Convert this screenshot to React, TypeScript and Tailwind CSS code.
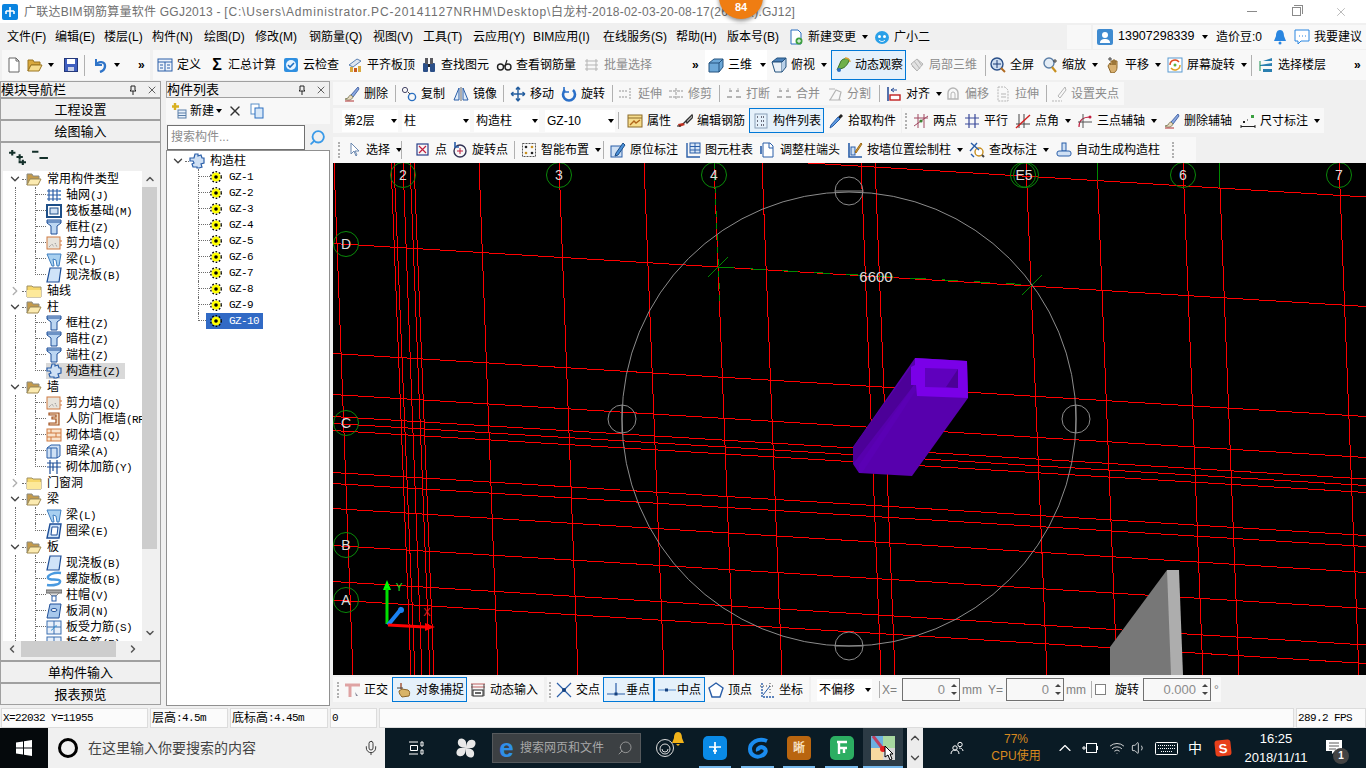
import type { ReactNode } from 'react'
import clsx from 'clsx'
import { ChevronDown, ChevronLeft, ChevronRight, ChevronUp, Mic, Search, Volume1, Wifi, X } from 'lucide-react'

const S = ({ children, className }: { children: ReactNode; className?: string }) => (
  <svg viewBox="0 0 16 16" className={clsx('h-4 w-4 shrink-0', className)} fill="none">
    {children}
  </svg>
)

const B = '#2a5ea8'
const G = '#b5b5b5'

// toolbar icons
const I = {
  doc: <S><path d="M3 1h7l3 3v11H3z" fill="#fff" stroke="#666" /><path d="M10 1v3h3" stroke="#666" /></S>,
  folder: <S><path d="M1 3h5l1 2h6v3H4l-3 6z" fill="#d9a93e" stroke="#9a7420" /><path d="M4 8h11l-3 6H1z" fill="#f6dc8c" stroke="#9a7420" /></S>,
  save: <S><rect x="1.5" y="1.5" width="13" height="13" fill="#3f5fc0" stroke="#24387a" /><rect x="4" y="2" width="8" height="5" fill="#fff" /><rect x="5" y="10" width="6" height="4" fill="#c8d0e8" /></S>,
  undo: <S><path d="M4 2v6h6" stroke="#2f74c8" strokeWidth="2" /><path d="M4 8c2-4 9-4 9 1 0 3-2 5-5 6" stroke="#2f74c8" strokeWidth="2.4" /></S>,
  define: <S><rect x="1" y="2" width="14" height="12" fill="#eef3fa" stroke={B} /><path d="M1 5h14M8 5v9M3 8h3M3 11h3M10 8h3M10 11h3" stroke={B} /></S>,
  sigma: <span className="w-[14px] shrink-0 text-center text-[16px] font-bold leading-none">Σ</span>,
  cloud: <S><rect x="1" y="1" width="14" height="14" rx="2" fill="#2f8fe0" /><circle cx="8" cy="8" r="5" fill="#e8f4ff" /><path d="M5 8l2 2 4-4" stroke="#1f6fc0" strokeWidth="1.6" /></S>,
  level: <S><path d="M2 8l8-6 4 2-8 6z" fill="#dfe6f0" stroke="#5a7fb0" /><rect x="3" y="10" width="3" height="5" fill="#d9a93e" /><rect x="7" y="11" width="3" height="4" fill="#c85a20" /><rect x="11" y="9" width="3" height="6" fill="#d9a93e" /></S>,
  binoc: <S><rect x="2" y="6" width="5" height="9" rx="1" fill="#2b4f88" /><rect x="9" y="6" width="5" height="9" rx="1" fill="#2b4f88" /><rect x="4" y="1" width="3" height="6" fill="#59595f" /><rect x="9" y="1" width="3" height="6" fill="#59595f" /><rect x="7" y="7" width="2" height="3" fill="#222" /></S>,
  glass: <S><circle cx="4.5" cy="10" r="3" stroke="#222" strokeWidth="1.4" /><circle cx="12" cy="10" r="3" stroke="#222" strokeWidth="1.4" /><path d="M7 9h2.4M9 9l2-6" stroke="#222" strokeWidth="1.2" /></S>,
  batch: <S><path d="M3 2v12M1 4h13M1 8h13M1 12h13M12 2v12" stroke={G} /></S>,
  cube: <S><path d="M1 6l5-4h9v8l-4 5H1z" fill="#6ca8d8" stroke="#24527e" /><path d="M1 6h10v9M11 6l4-4" stroke="#24527e" /></S>,
  cubeTop: <S><path d="M1 5l5-4h9l-4 4z" fill="#4a80b8" stroke="#24527e" /><path d="M1 5h10v10H4z" fill="#eaf1f8" stroke="#24527e" /><path d="M11 5l4-4v9l-4 5" fill="#b8d0e8" stroke="#24527e" /></S>,
  orbit: <S><path d="M2 13l4-9c2-3 8-3 8-1s-3 7-6 8z" fill="#6fb04a" stroke="#3a7028" /><circle cx="4" cy="13" r="2" fill="#2a6fc0" /><path d="M10 1c3 0 5 2 5 4" stroke="#e0a030" strokeWidth="1.4" /></S>,
  part3d: <S><path d="M2 7l6-5 6 5-6 7z" fill="#e2e2e2" stroke={G} /><path d="M5 4l6 8M8 2l5 7M3 9l5 5" stroke={G} /></S>,
  fit: <S><circle cx="7" cy="7" r="6" fill="#cfdff2" stroke="#2a4f88" strokeWidth="1.4" /><path d="M7 3v8M3 7h8" stroke="#1f3f78" /><path d="M11 11l4 4" stroke="#b06a20" strokeWidth="2" /></S>,
  zoom: <S><circle cx="7" cy="6" r="5" fill="#e4edf6" stroke="#5b7ea6" strokeWidth="1.4" /><path d="M10 10l4 5" stroke="#c89020" strokeWidth="2.2" /><path d="M13 2v4M11 4h4" stroke="#444" /></S>,
  hand: <S><path d="M3 9l2-3 1 2V4h2v4-5h2v5-4h2v6c0 4-2 6-5 6H6z" fill="#d8b070" stroke="#8a6428" /><path d="M3 2h4M5 0v4" stroke="#444" /></S>,
  rotate: <S><rect x="1" y="1" width="14" height="14" fill="#fff" stroke="#5a9ad0" /><path d="M3 8a5 5 0 0 1 9-3" stroke="#e04a20" strokeWidth="1.5" /><path d="M13 8a5 5 0 0 1-9 3" stroke="#e0a020" strokeWidth="1.5" /><circle cx="8" cy="8" r="1.5" fill="#60b040" /></S>,
  floors: <S><path d="M5 4l9-3v3H5zM2 8l12-2v3H2zM5 12h9v3H5z" fill="#2a7fb0" /><path d="M2 4v10" stroke="#1a9050" /></S>,
  brush: <S><path d="M14 1L7 9l2 2 6-8z" fill="#8aa8e0" stroke="#4a68a8" /><path d="M7 9c-2 0-2 2-3 3l-3 1c3 2 7 1 8-2z" fill="#e8d8c0" stroke="#886" /><path d="M1 15h9" stroke="#b03030" /></S>,
  copy: <S><circle cx="4" cy="4" r="2.6" stroke="#446" /><circle cx="11" cy="11" r="3.6" stroke="#2a6fc0" strokeWidth="1.4" /><path d="M7 6l2 2" stroke="#444" /></S>,
  mirror: <S><path d="M6 2v12H1zM10 2v12h5z" fill="#e0ecf8" stroke="#2a5ea8" /><path d="M8 1v14" stroke="#666" /></S>,
  move: <S><path d="M8 1v14M1 8h14M8 1L6 3.500M8 1l2 2.500M8 15l-2-2.500M8 15l2-2.500M1 8l2.500-2M1 8l2.500 2M15 8l-2.500-2M15 8l-2.500 2" stroke="#235d9e" strokeWidth="1.4" /></S>,
  rot: <S><path d="M4 4a6 6 0 1 0 8 0" stroke="#2a6fc8" strokeWidth="2.6" /><path d="M3 1v5h5" stroke="#2a6fc8" strokeWidth="1.6" /></S>,
  extend: <S><path d="M1 5h8M1 11h8M12 2v12" stroke={G} strokeWidth="1.4" strokeDasharray="2 1" /></S>,
  trim: <S><path d="M1 5h14M1 11h14M8 2v12" stroke={G} strokeWidth="1.4" strokeDasharray="3 1" /></S>,
  brk: <S><path d="M1 11h5M10 11h5M3 5h3M10 5h3" stroke={G} strokeWidth="2" /><path d="M4 2v3M12 2v3" stroke={G} /></S>,
  poly: <S><path d="M2 14h12M3 14l6-10 5 2-2 8M2 3h6" stroke={G} strokeWidth="1.2" /></S>,
  alignL: <S><path d="M2 1v14" stroke="#2a4f98" strokeWidth="1.6" /><rect x="4" y="9" width="10" height="5" fill="#fff" stroke="#c02020" strokeWidth="1.4" /><path d="M5 4h6M5 4l3-2M5 4l3 2" stroke="#2a4f98" /></S>,
  offset: <S><path d="M3 13V7a5 5 0 0 1 10 0v6z" stroke={G} strokeWidth="1.4" /><path d="M6 13V8a2 2 0 0 1 4 0v5" stroke={G} /></S>,
  stretch: <S><path d="M3 1h7l3 3v11H3z" stroke={G} strokeDasharray="2 1" /><path d="M6 8h5M6 11h5" stroke={G} /></S>,
  grip: <S><path d="M14 1L7 10l2 2 6-8z" stroke={G} /><path d="M1 15h10" stroke={G} strokeDasharray="2 1" /></S>,
  attr: <S><rect x="1" y="2" width="14" height="12" fill="#f6dc8c" stroke="#8a6a28" /><path d="M1 5h14" stroke="#8a6a28" /><path d="M3 12l4-4 2 2 4-3" stroke="#b0661c" strokeWidth="1.4" /></S>,
  edit: <S><path d="M15 2L9 8l1 2 6-6zM9 8l-3 3" stroke="#333" strokeWidth="1.4" /><path d="M1 11l5-1 2 2-6 2z" fill="#c03020" /><path d="M0 13h4" stroke="#222" /></S>,
  list: <S><rect x="2" y="1" width="12" height="14" stroke="#8aa0b8" /><path d="M4 4h2M4 8h2M4 12h2M8 4h4M8 8h4M8 12h4" stroke="#445" strokeDasharray="1 1" strokeWidth="1.4" /></S>,
  picker: <S><path d="M13 1l2 2-3 3-2-2z" fill="#222" /><path d="M10 4l2 2-7 7-3 2 1-3z" fill="#5e9ae0" stroke="#2a5ea8" /></S>,
  two: <S><path d="M1 13L15 3M5 1v14M11 1v14M1 5h14" stroke="#a04860" /><circle cx="8" cy="8" r="1.600" fill="#3a8030" /></S>,
  par: <S><path d="M5 1v14M11 1v14M1 5h14M1 11h14" stroke="#3a4a9a" strokeWidth="1.2" /></S>,
  ang: <S><path d="M4 1v14M9 1v14M1 11h14" stroke="#444" /><path d="M1 15L15 2" stroke="#d02020" strokeWidth="1.4" /></S>,
  three: <S><path d="M2 14c0-7 4-10 11-10" stroke="#c02040" strokeWidth="1.2" /><path d="M6 1v14M1 9h14" stroke="#555" /><circle cx="13" cy="4" r="1.500" fill="#c02040" /></S>,
  dim: <S><path d="M1 12v3M15 12v3M1 13.500h14" stroke="#222" /><rect x="3" y="8" width="2" height="2" fill="#222" /><rect x="11" y="2" width="3" height="3" fill="#3aa040" /><path d="M7 7h1" stroke="#222" /></S>,
  cursor: <S><path d="M5 1v11l3-3 2 5 1-1-2-4h4z" fill="#fff" stroke="#6a88b0" /></S>,
  pointX: <S><rect x="2" y="2" width="11" height="11" stroke="#2a3f88" strokeWidth="1.2" /><path d="M4 4l7 7M11 4l-7 7" stroke="#c02040" strokeWidth="1.2" /></S>,
  rotPt: <S><circle cx="8" cy="9" r="6" stroke="#335" strokeWidth="1.4" /><path d="M8 6v6M5 9h6" stroke="#c02040" /><path d="M3 0v5h4" stroke="#2a5ea8" strokeWidth="1.6" /></S>,
  smart: <S><rect x="1.5" y="1.5" width="13" height="13" stroke="#555" strokeDasharray="2 1" /><circle cx="5" cy="5" r="1.300" fill="#222" /><circle cx="11" cy="5" r="1.300" fill="#c89020" /><circle cx="5" cy="11" r="1.300" fill="#c89020" /><circle cx="11" cy="11" r="1.300" fill="#222" /></S>,
  tag: <S><rect x="1" y="4" width="11" height="11" fill="#cfe0f4" stroke="#2a5ea8" /><path d="M6 11l7-10 2 2-7 10-3 1z" fill="#4a90d8" stroke="#1e4f88" /></S>,
  table: <S><path d="M2 1v14h13" stroke="#2a5ea8" strokeWidth="1.4" /><rect x="5" y="1" width="10" height="10" fill="#d8e6f6" stroke="#2a5ea8" /><path d="M5 4.500h10M5 8h10M10 1v10" stroke="#2a5ea8" /></S>,
  adjust: <S><path d="M3 1h7l3 3v11H3z" fill="#fff" stroke="#2a5ea8" /><path d="M9 1v5h4" stroke="#2a5ea8" /><path d="M1 4v8" stroke="#2a5ea8" strokeWidth="1.6" /></S>,
  wall: <S><path d="M2 1v14h13" stroke="#2a5ea8" strokeWidth="1.6" /><rect x="4" y="5" width="4" height="8" fill="#cfe0f4" stroke="#2a5ea8" /><path d="M8 10l6-9 1 1-6 9z" fill="#e0a030" stroke="#9a6a18" /></S>,
  check: <S><circle cx="10" cy="10" r="4" fill="#fff" stroke="#c89020" strokeWidth="1.4" /><path d="M13 13l2 2" stroke="#444" strokeWidth="2" /><path d="M2 1l8 7M8 1L1 9M2 12l3 3" stroke="#2a5ea8" strokeWidth="1.4" /></S>,
  auto: <S><rect x="6" y="1" width="4" height="8" fill="#cfe0f4" stroke="#2a5ea8" /><rect x="1" y="9" width="14" height="5" rx="2" fill="#cfe0f4" stroke="#2a5ea8" /></S>,
  ortho: <S><path d="M1 3h15M6 3v12" stroke="#dfa3a3" strokeWidth="3" /><path d="M11 10l3 4-2 0z" fill="#889" /></S>,
  snap: <S><path d="M5 1v6" stroke="#a05030" strokeWidth="1.4" /><path d="M1 6h6" stroke="#444" /><path d="M3 9l3-2 6 1c2 1 2 4 1 6l-7 1c-2-2-3-4-3-6z" fill="#d8b468" stroke="#8a6428" /></S>,
  dyn: <S><path d="M1 2h14M1 5h14" stroke="#c06060" /><path d="M2 2v12M14 2v12" stroke="#444" /><rect x="3" y="8" width="10" height="6" fill="#fff" stroke="#222" /><path d="M5 11h6" stroke="#222" strokeWidth="1.4" /></S>,
  cross: <S><path d="M1 1l14 14M15 1L1 15" stroke="#2a5ea8" strokeWidth="1.2" /><circle cx="8" cy="8" r="2" fill="#14407e" /></S>,
  vert: <S><path d="M8 1l7 5-3 9H4L1 6z" fill="#fff" stroke="#2a5ea8" strokeWidth="1.4" /></S>,
  coord: <S><path d="M3 1v14h12" stroke="#2a5ea8" strokeDasharray="2 1" strokeWidth="1.4" /><path d="M1 4h14M11 1v12" stroke="#444" strokeDasharray="1 2" /><path d="M4 13l7-9" stroke="#2a5ea8" /></S>,
  user: <S><rect x="0" y="0" width="16" height="16" rx="2" fill="#3f8bd0" /><circle cx="8" cy="6" r="3" fill="#fff" /><path d="M3 14c0-3 2-4 5-4s5 1 5 4z" fill="#fff" /></S>,
  bell: <S><path d="M8 1c-3 0-4 3-4 6l-2 5h12l-2-5c0-3-1-6-4-6z" fill="#2a86e0" /><circle cx="8" cy="14" r="1.500" fill="#2a86e0" /></S>,
  msg: <S><path d="M1 1h14v11H7l-3 3v-3H1z" fill="#fff" stroke="#2a86e0" /><path d="M5 7h1M8 7h1M11 7h1" stroke="#2a86e0" /></S>,
  change: <S><path d="M3 1h7l3 3v11H3z" fill="#fff" stroke="#2a6ec0" /><circle cx="11" cy="12" r="3.500" fill="#3fa040" /><path d="M11 10v4M9 12h4" stroke="#fff" /></S>,
  helper: <S><ellipse cx="8" cy="8.500" rx="7" ry="6.500" fill="#2aa0e8" /><circle cx="5.500" cy="7.500" r="1.500" fill="#fff" /><circle cx="10.500" cy="7.500" r="1.500" fill="#fff" /><path d="M5 11c2 2 4 2 6 0" stroke="#fff" /></S>,
  perp: <svg viewBox="0 0 20 16" className="h-4 w-5 shrink-0" fill="none"><path d="M10 1v11M1 12h18" stroke="#2a5ea8" strokeWidth="1.2" /><rect x="8.500" y="10.500" width="3" height="3" fill="#14407e" /></svg>,
  mid: <svg viewBox="0 0 20 16" className="h-4 w-5 shrink-0" fill="none"><path d="M1 8h18" stroke="#7fa8d8" strokeWidth="1.4" /><rect x="8" y="6.500" width="3" height="3" fill="#14407e" /></svg>,
}

// tree icons
const Tr = {
  open: <S><path d="M1 3h5l1 2h6v3H4l-3 6z" fill="#c49a4a" stroke="#8a8a80" /><path d="M4 8h11l-3 6H1z" fill="#fbeab0" stroke="#a08a50" /></S>,
  closed: <S><path d="M1 3h5l1 1h8v10H1z" fill="#f6d76c" stroke="#a09060" /><path d="M1 7h14v7H1z" fill="#fde99a" /></S>,
  grid: <S><path d="M1 4h12M1 8h12M1 12h12M3 2v12M7 2v12M11 2v12" stroke={B} strokeWidth="1.2" /><path d="M14 3v10" stroke="#6a9ad0" strokeWidth="2" strokeDasharray="2 2" /></S>,
  raft: <S><rect x="1" y="2" width="14" height="12" fill="#fff" stroke="#1e4f88" strokeWidth="2" /><rect x="4" y="5" width="8" height="6" fill="#cfe0f4" stroke="#1e4f88" /></S>,
  col: <S><path d="M1 1h14v3l-4 3v8H5V7L1 4z" fill="#bcd6f2" stroke="#1e4f98" /><path d="M1 3h14" stroke="#1e4f98" /></S>,
  wall: <S><rect x="1" y="2" width="13" height="12" fill="#e8e4dc" stroke="#d07a40" /><path d="M3 12l3-3 2 3M9 8l2 4" stroke="#888" strokeDasharray="1 1" /><path d="M15 5v7" stroke="#d07a40" strokeDasharray="2 2" /></S>,
  beam: <S><path d="M1 3h14l-2 12h-2l-1-6-3-1 1 7H6z" fill="#a8d0f0" stroke="#3f7fc0" /></S>,
  slab: <S><path d="M4 1h11l-2 14H1z" fill="#cfe3f8" stroke="#1e4f98" strokeWidth="1.2" /></S>,
  gz: <S><path d="M6 1h3v2l3-1 1 3h2v5l-3 1 1 3-3 1H8v-1H4l-1-3 2-1-1-2H1V5h4z" fill="#cfe0f4" stroke="#2a5ea8" strokeWidth="1.2" /></S>,
  door: <S><path d="M3 2h10v12H3v-2h7V8H6V6h4V4H3z" fill="#f4dcc0" stroke="#a05020" strokeWidth="1.2" /></S>,
  brick: <S><rect x="1" y="2" width="14" height="12" fill="#f9e4cc" stroke="#d07a40" /><path d="M1 6h14M1 10h14M5 2v4M10 6v4M5 10v4" stroke="#d07a40" /></S>,
  hbeam: <S><path d="M1 5l4-3h9v11l-3 2H1z" fill="#cfe0f4" stroke="#2a5ea8" /><path d="M1 5h10v10M5 5v10" stroke="#2a5ea8" /></S>,
  rein: <S><path d="M1 4h14M1 8h14M4 1v14M11 1v14M7 4v8" stroke="#1e4f98" strokeWidth="1.2" /></S>,
  ring: <S><path d="M4 1h11l-2 14H1z" fill="#cfe3f8" stroke="#1e4f98" strokeWidth="1.400" /><path d="M6 4h6l-1 8H5z" fill="#fff" stroke="#1e4f98" /></S>,
  spiral: <S><path d="M15 2C8 1 1 4 2 7s11 0 12 3-6 5-13 4" stroke="#4a9ae0" strokeWidth="2.400" /></S>,
  cap: <S><path d="M0 3h16v3H0z" fill="#aaa" stroke="#666" /><path d="M3 6l3 3h4l3-3z" fill="#ddd" stroke="#888" /><rect x="6" y="9" width="4" height="5" fill="#fff" stroke="#2a5ea8" /></S>,
  hole: <S><path d="M4 1h11l-2 14H1z" fill="#a8c8ec" stroke="#1e4f98" /><ellipse cx="8" cy="7" rx="3" ry="1.500" fill="#fff" stroke="#1e4f98" /></S>,
  rebar: <S><rect x="1" y="2" width="14" height="13" fill="#e8f0fa" stroke="#3a6fb0" /><path d="M1 8h14M8 2v13" stroke="#3a6fb0" /><path d="M5 11c2 1 3-5 6-4" stroke="#2a8fd0" /></S>,
  gear: <svg viewBox="0 0 12 12" className="h-3 w-3 shrink-0"><circle cx="6" cy="6" r="4.500" fill="#ffff00" /><circle cx="6" cy="6" r="5.300" fill="none" stroke="#000" strokeWidth="1.300" strokeDasharray="1.700 1.700" /><circle cx="6" cy="6" r="1.800" fill="#000" /></svg>,
}

const Caret = ({ className }: { className?: string }) => (
  <span className={clsx('h-0 w-0 shrink-0 border-x-[3px] border-t-[4px] border-x-transparent border-t-black', className)} />
)

type ToolProps = { w: string; i?: ReactNode; t: string; gray?: boolean; arrow?: boolean; active?: boolean; className?: string }

// one toolbar button, width taken up to where the next one starts
const T = ({ w, i, t, gray, arrow, active, className }: ToolProps) => (
  <div
    className={clsx(
      'flex h-full shrink-0 items-center whitespace-nowrap',
      w,
      active && 'box-border border border-[#0078d7] bg-[#e5f1fb] pl-[3px]',
      gray && 'text-[#8c8c8c]',
      className,
    )}
  >
    {i}
    <span className="ml-1">{t}</span>
    {arrow && <Caret className="ml-[6px]" />}
  </div>
)

const Sep = ({ w }: { w: string }) => (
  <div className={clsx('flex h-full shrink-0 items-center', w)}>
    <span className="h-[70%] w-px bg-[#b0b0b0]" />
  </div>
)

const Dots = ({ className }: { className?: string }) => (
  <span className={clsx('h-4 w-[2px] shrink-0 border-l-2 border-dotted border-[#b0b0b0]', className)} />
)

const Menu = ({ t, w }: { t: string; w: string }) => <span className={clsx('shrink-0 whitespace-nowrap', w)}>{t}</span>

function TitleBar() {
  return (
    <div className="relative flex h-[23px] shrink-0 items-center bg-white pl-[2px] text-[#707070]">
      <svg viewBox="0 0 16 16" className="h-4 w-4 shrink-0">
        <rect width="16" height="16" rx="2" fill="#0a84e0" />
        <path d="M8 3v10M4 7h8M4 7v3M12 7v3" stroke="#fff" strokeWidth="1.6" fill="none" />
      </svg>
      <span className="ml-[6px] whitespace-nowrap tracking-[0.24px]">
        广联达BIM钢筋算量软件 GGJ2013 - <span className="tracking-[0.84px]">[C:\Users\Administrator.PC-20141127NRHM\Desktop\</span>白龙村-2018-02-03-20-08-17(2600版).GJ12]
      </span>
      <div className="ml-auto flex items-center text-[#8a8a8a]">
        <span className="h-px w-[10px] bg-[#8a8a8a]" />
        <span className="ml-[35px] h-[9px] w-[9px] border border-[#8a8a8a] shadow-[1px_-1px_0_0_#fff,2px_-2px_0_0_#8a8a8a]" />
        <X className="ml-[33px] mr-[18px] h-[14px] w-[14px]" strokeWidth={1} />
      </div>
      {/* notification bubble over the caption */}
      <div className="absolute left-[719px] top-[-25px] flex h-[44px] w-[44px] items-end justify-center rounded-full bg-[#ef7d12] pb-[6px] text-[11px] font-bold leading-none text-white shadow-[0_2px_4px_rgba(0,0,0,0.45)]">
        84
      </div>
    </div>
  )
}

function MenuBar() {
  return (
    <div className="flex h-[27px] shrink-0 items-center pl-[7px]">
      <Menu t="文件(F)" w="w-[48px]" />
      <Menu t="编辑(E)" w="w-[49px]" />
      <Menu t="楼层(L)" w="w-[48px]" />
      <Menu t="构件(N)" w="w-[52px]" />
      <Menu t="绘图(D)" w="w-[51px]" />
      <Menu t="修改(M)" w="w-[54px]" />
      <Menu t="钢筋量(Q)" w="w-[64px]" />
      <Menu t="视图(V)" w="w-[50px]" />
      <Menu t="工具(T)" w="w-[50px]" />
      <Menu t="云应用(Y)" w="w-[60px]" />
      <Menu t="BIM应用(I)" w="w-[70px]" />
      <Menu t="在线服务(S)" w="w-[73px]" />
      <Menu t="帮助(H)" w="w-[51px]" />
      <Menu t="版本号(B)" w="w-[61px]" />
      <T w="w-[86px]" i={I.change} t="新建变更" arrow />
      <T w="w-[193px]" i={I.helper} t="广小二" />
      <div className="h-[24px] w-[24px] shrink-0 bg-[#f8f8f8]" />
      <div className="ml-[2px] flex h-[24px] flex-1 items-center bg-[#f8f8f8] pl-1">
        {I.user}
        <span className="ml-[5px] w-[77px] text-[12.500px]">13907298339</span>
        <Caret className="ml-[7px]" />
        <span className="ml-[8px] w-[48px]">造价豆:0</span>
        <span className="ml-[8px]">{I.bell}</span>
        <span className="ml-[6px]">{I.msg}</span>
        <span className="ml-1">我要建议</span>
      </div>
    </div>
  )
}

function MainToolbar() {
  return (
    <div className="flex h-[30px] shrink-0 items-center pl-[2px]">
      <div className="flex h-full w-[148px] shrink-0 items-center bg-[#f8f8f8] pl-[4px]">
        <div className="w-[21px]">{I.doc}</div>
        <div className="flex w-[36px] items-center">{I.folder}<Caret className="ml-[5px]" /></div>
        <div className="w-[21px]">{I.save}</div>
        <Sep w="w-[8px]" />
        <div className="flex w-[46px] items-center">{I.undo}<Caret className="ml-[6px]" /></div>
        <span className="text-[12px] font-bold leading-none">»</span>
      </div>
      <div className="ml-[3px] flex h-full flex-1 items-center bg-[#f8f8f8] pl-[4px]">
        <T w="w-[53px]" i={I.define} t="定义" />
        <T w="w-[73px]" i={I.sigma} t="汇总计算" />
        <T w="w-[64px]" i={I.cloud} t="云检查" />
        <T w="w-[74px]" i={I.level} t="平齐板顶" />
        <T w="w-[75px]" i={I.binoc} t="查找图元" />
        <T w="w-[88px]" i={I.glass} t="查看钢筋量" />
        <T w="w-[108px]" i={I.batch} t="批量选择" gray />
        <span className="w-[13px] text-[12px] font-bold leading-none">»</span>
        <div className="flex h-full w-[62px] items-center bg-white pl-[3px]">
          <T w="w-[52px]" i={I.cube} t="三维" />
          <Caret />
        </div>
        <T w="w-[60px]" i={I.cubeTop} t="俯视" arrow className="ml-[4px]" />
        <T w="w-[75px]" i={I.orbit} t="动态观察" active />
        <T w="w-[76px]" i={I.part3d} t="局部三维" gray className="ml-[3px]" />
        <Sep w="w-[5px]" />
        <T w="w-[52px]" i={I.fit} t="全屏" />
        <T w="w-[63px]" i={I.zoom} t="缩放" arrow />
        <T w="w-[62px]" i={I.hand} t="平移" arrow />
        <T w="w-[84px]" i={I.rotate} t="屏幕旋转" arrow />
        <Sep w="w-[7px]" />
        <T w="w-[96px]" i={I.floors} t="选择楼层" />
        <span className="text-[12px] font-bold leading-none">»</span>
      </div>
    </div>
  )
}

function RowA() {
  return (
    <div className="mt-[2px] flex h-[23px] w-[791px] shrink-0 items-center bg-[#f8f8f8] pl-[11px]">
      <T w="w-[51px]" i={I.brush} t="删除" />
      <Sep w="w-[6px]" />
      <T w="w-[52px]" i={I.copy} t="复制" />
      <T w="w-[50px]" i={I.mirror} t="镜像" />
      <Sep w="w-[7px]" />
      <T w="w-[51px]" i={I.move} t="移动" />
      <T w="w-[51px]" i={I.rot} t="旋转" />
      <Sep w="w-[6px]" />
      <T w="w-[50px]" i={I.extend} t="延伸" gray />
      <T w="w-[51px]" i={I.trim} t="修剪" gray />
      <Sep w="w-[7px]" />
      <T w="w-[50px]" i={I.brk} t="打断" gray />
      <T w="w-[51px]" i={I.brk} t="合并" gray />
      <T w="w-[52px]" i={I.poly} t="分割" gray />
      <Sep w="w-[7px]" />
      <T w="w-[59px]" i={I.alignL} t="对齐" arrow />
      <T w="w-[50px]" i={I.offset} t="偏移" gray />
      <T w="w-[51px]" i={I.stretch} t="拉伸" gray />
      <Sep w="w-[5px]" />
      <T w="w-[70px]" i={I.grip} t="设置夹点" gray />
    </div>
  )
}

const Drop = ({ t, w }: { t: string; w: string }) => (
  <div className={clsx('flex h-[22px] shrink-0 items-center justify-between bg-white pl-[2px] pr-[1px]', w)}>
    <span className="whitespace-nowrap">{t}</span>
    <Caret />
  </div>
)

function RowB() {
  return (
    <div className="mt-[3px] flex h-[25px] shrink-0 items-center">
      <div className="flex h-full w-[568px] shrink-0 items-center bg-[#f8f8f8] pl-[9px]">
        <Drop t="第2层" w="w-[56px]" />
        <Drop t="柱" w="ml-[4px] w-[68px]" />
        <Drop t="构造柱" w="ml-[4px] w-[65px]" />
        <Drop t="GZ-10" w="ml-[6px] w-[70px]" />
        <Sep w="ml-[3px] w-[9px]" />
        <T w="w-[48px]" i={I.attr} t="属性" />
        <T w="w-[74px]" i={I.edit} t="编辑钢筋" className="pl-[2px]" />
        <T w="w-[75px]" i={I.list} t="构件列表" active />
        <T w="w-[72px]" i={I.picker} t="拾取构件" className="ml-[4px]" />
      </div>
      <div className="ml-[1px] flex h-full w-[422px] shrink-0 items-center bg-[#f8f8f8] pl-[3px]">
        <Dots />
        <T w="w-[51px]" i={I.two} t="两点" className="ml-[6px]" />
        <T w="w-[51px]" i={I.par} t="平行" />
        <T w="w-[62px]" i={I.ang} t="点角" arrow />
        <T w="w-[87px]" i={I.three} t="三点辅轴" arrow />
        <T w="w-[76px]" i={I.brush} t="删除辅轴" />
        <T w="w-[84px]" i={I.dim} t="尺寸标注" arrow />
      </div>
    </div>
  )
}

function RowC() {
  return (
    <div className="mt-[4px] flex h-[26px] shrink-0 items-center">
      <div className="flex h-full w-[833px] shrink-0 items-center bg-[#f8f8f8] pl-[5px]">
        <Dots />
        <T w="w-[55px]" i={I.cursor} t="选择" arrow className="ml-[6px]" />
        <Sep w="w-[14px]" />
        <T w="w-[37px]" i={I.pointX} t="点" />
        <T w="w-[62px]" i={I.rotPt} t="旋转点" />
        <Sep w="w-[7px]" />
        <T w="w-[82px]" i={I.smart} t="智能布置" arrow />
        <Sep w="w-[7px]" />
        <T w="w-[75px]" i={I.tag} t="原位标注" />
        <T w="w-[75px]" i={I.table} t="图元柱表" />
        <T w="w-[87px]" i={I.adjust} t="调整柱端头" />
        <T w="w-[122px]" i={I.wall} t="按墙位置绘制柱" arrow />
        <T w="w-[87px]" i={I.check} t="查改标注" arrow />
        <T w="w-[109px]" i={I.auto} t="自动生成构造柱" />
      </div>
      <div className="flex h-full w-[30px] shrink-0 items-center bg-[#f8f8f8] pl-[6px]">
        <Dots />
      </div>
    </div>
  )
}

// [x at the top edge, x at the bottom edge]
const verticals = [
  [334, 353], [391, 411], [394, 415], [403, 422], [410, 430], [414, 434], [479, 498], [559, 578],
  [644, 664], [714, 734], [762, 782], [861, 881], [875, 895], [1026, 1047], [1097, 1117], [1183, 1203],
  [1219, 1239], [1339, 1359],
]

// [y at the left edge, y at the right edge]
const horizontals = [
  [134, 197], [243.500, 306.500], [353.500, 416.500], [394.500, 457.500], [416.500, 479], [423.500, 485.500], [430.500, 492.500],
  [472.500, 535.500], [483.500, 546.500], [508.500, 572.500], [545.500, 608.500], [581.500, 645], [600, 663.500],
]

const axisLabels = [
  { t: '2', x: 403, y: 175 }, { t: '3', x: 559, y: 175 }, { t: '4', x: 714, y: 175 },
  { t: '6', x: 1183, y: 175 }, { t: '7', x: 1339, y: 175 }, { t: 'D', x: 346, y: 244 },
  { t: 'C', x: 346, y: 423 }, { t: 'B', x: 346, y: 545 }, { t: 'A', x: 346, y: 600 },
]

const grips = [
  [849, 191], [622, 419], [1076, 419], [849, 646],
]

function Canvas() {
  return (
    <svg viewBox="333 163 1033 512" className="block h-[512px] w-full shrink-0 bg-black">
      <g stroke="#ff0000" strokeWidth="1" shapeRendering="crispEdges">
        {verticals.map(([a, b]) => (
          <line key={a} x1={a} y1={163} x2={b} y2={675} />
        ))}
        {horizontals.map(([a, b]) => (
          <line key={a} x1={333} y1={a} x2={1366} y2={b} />
        ))}
      </g>
      <g stroke="#008a00" strokeWidth="1" shapeRendering="crispEdges">
        <line x1={1097} y1={163} x2={1098} y2={181} />
        <line x1={1219} y1={163} x2={1220} y2={187} />
        <line x1={714} y1={163} x2={720} y2={305} strokeDasharray="6 6" />
        <line x1={718} y1={267} x2={1032} y2={285} strokeDasharray="16 16" />
        <path d="M708 277L728 257M1022 295L1042 275" />
      </g>
      <g stroke="#0a8a0a" fill="none">
        {axisLabels.map((a) => (
          <circle key={a.t} cx={a.x} cy={a.y} r={12.500} />
        ))}
        <circle cx={1023} cy={175} r={12.500} />
        <circle cx={1026} cy={175} r={12.500} />
      </g>
      <g fill="#dcdcdc" fontSize="14" textAnchor="middle" dominantBaseline="central" fontFamily="'Liberation Sans',sans-serif">
        {axisLabels.map((a) => (
          <text key={a.t} x={a.x} y={a.y}>{a.t}</text>
        ))}
        <text x={1024} y={175}>E5</text>
        <text x={876} y={276} fontSize="15">6600</text>
      </g>
      <g stroke="#8c8c8c" fill="none">
        <circle cx={849} cy={419} r={227} />
        {grips.map(([x, y]) => (
          <circle key={x} cx={x} cy={y} r={14} />
        ))}
        <path d="M622 405V433M1076 405V433M835 191H863M835 646H863" />
      </g>
      {/* purple column */}
      <path d="M915 358L967 361L968 398L912 476L859 473L853 464L853 447Z" fill="#5700ad" />
      <path d="M911 367L853 447L853 464L914 385Z" fill="#4c0098" />
      <path d="M914 385L859 465L859 473L862 473L916 390Z" fill="#5a00b4" />
      <path d="M915 358L967 361L968 398L917 396L916 385L911 385L911 367L915 365Z" fill="#7a00e8" />
      <path d="M925 368L958 369L958 388L925 387Z" fill="#5f00bd" />
      <path d="M958 369L958 388L946 387Z" fill="#4c0098" />
      {/* grey wedge */}
      <path d="M1167 570L1171 570L1176 675L1110 675L1110 647Z" fill="#777777" />
      <path d="M1167 570L1179 570L1183 675L1171 675Z" fill="#adadad" />
      {/* axis gizmo */}
      <path d="M387 580L391 590H383Z" fill="#00ff00" />
      <path d="M387 588V624" stroke="#00e000" strokeWidth="3" />
      <path d="M388 625L402 608" stroke="#1a80f0" strokeWidth="4" />
      <circle cx="401" cy="610" r="3" fill="#1a80f0" />
      <path d="M388 625L425 627" stroke="#ff0000" strokeWidth="3" />
      <path d="M425 623L435 627L425 631Z" fill="#ff0000" />
      <text x={399} y={591} fontSize="10" fill="#20e020" textAnchor="middle" fontFamily="'Liberation Sans',sans-serif">Y</text>
      <text x={427} y={616} fontSize="11" fill="#e02020" textAnchor="middle" fontFamily="'Liberation Sans',sans-serif">X</text>
    </svg>
  )
}

const NumBox = ({ v, w }: { v: string; w: string }) => (
  <div className={clsx('flex h-[23px] shrink-0 items-center justify-end border border-[#707070] bg-[#f8f8f8] text-[#8c8c8c]', w)}>
    <span className="text-[13px]">{v}</span>
    <span className="ml-[6px] mr-[2px] flex flex-col gap-[5px]">
      <span className="h-0 w-0 border-x-[3px] border-b-[3px] border-x-transparent border-b-[#444]" />
      <span className="h-0 w-0 border-x-[3px] border-t-[3px] border-x-transparent border-t-[#444]" />
    </span>
  </div>
)

function BottomBar() {
  return (
    <div className="flex h-[29px] shrink-0 items-center py-[2px]">
      <div className="flex h-full w-[211px] shrink-0 items-center bg-[#f8f8f8] pl-[4px]">
        <Dots />
        <T w="w-[48px]" i={I.ortho} t="正交" className="ml-[5px]" />
        <T w="w-[75px]" i={I.snap} t="对象捕捉" active />
        <T w="w-[74px]" i={I.dyn} t="动态输入" className="ml-[3px]" />
      </div>
      <div className="ml-[3px] flex h-full w-[262px] shrink-0 items-center bg-[#f8f8f8] pl-[2px]">
        <Dots />
        <T w="w-[47px]" i={I.cross} t="交点" className="ml-[5px]" />
        <div className="box-border flex h-full w-[51px] shrink-0 items-center border border-[#0078d7] bg-[#e5f1fb] pl-[2px]">{I.perp}<span>垂点</span></div>
        <div className="box-border flex h-full w-[51px] shrink-0 items-center border border-[#0078d7] bg-[#e5f1fb] pl-[2px]">{I.mid}<span>中点</span></div>
        <T w="w-[51px]" i={I.vert} t="顶点" className="ml-[3px]" />
        <T w="w-[49px]" i={I.coord} t="坐标" />
      </div>
      <div className="ml-[2px] flex h-full w-[410px] shrink-0 items-center bg-[#f8f8f8] pl-[6px]">
        <Drop t="不偏移" w="w-[55px]" />
        <Sep w="ml-[7px] w-[3px]" />
        <span className="w-[20px] text-[#808080]">X=</span>
        <NumBox v="0" w="w-[58px]" />
        <span className="ml-[2px] w-[26px] text-[#808080]">mm</span>
        <span className="w-[18px] text-[#808080]">Y=</span>
        <NumBox v="0" w="w-[58px]" />
        <span className="ml-[2px] w-[25px] text-[#808080]">mm</span>
        <Sep w="w-[4px]" />
        <span className="h-[11px] w-[11px] shrink-0 border border-[#808080] bg-white" />
        <span className="ml-[9px] w-[28px]">旋转</span>
        <NumBox v="0.000" w="w-[68px]" />
        <span className="ml-[3px] text-[#808080]">°</span>
      </div>
    </div>
  )
}

const PaneButton = ({ t }: { t: string }) => (
  <div className="box-border flex h-[22px] shrink-0 items-center justify-center border border-[#a0a0a0] bg-[#f0f0f0] text-[13px]">{t}</div>
)

const PaneHeader = ({ t }: { t: string }) => (
  <div className="mt-px box-border flex h-[17px] shrink-0 items-center border border-[#a0a0a0] pr-[2px]">
    <span className="whitespace-nowrap text-[13px] leading-none">{t}</span>
    <svg viewBox="0 0 10 10" className="ml-auto h-[10px] w-[10px]" fill="none"><path d="M3 1h4v4l1 1H2l1-1zM5 6v4" stroke="#222" /></svg>
    <X className="ml-2 h-3 w-3" strokeWidth={1.2} />
  </div>
)

const ExpandGlyphs = () => (
  <div className="flex h-[28px] shrink-0 items-center pl-[5px]">
    <svg viewBox="0 0 17 14" className="h-4 w-[18px]" fill="none">
      <path d="M1 3h6M4 0.500v5M8 7h6M11 4.500v5M11 10v2h6M14 9.500v5" stroke="#14302a" strokeWidth="2" />
    </svg>
    <svg viewBox="0 0 17 14" className="ml-[5px] h-4 w-[18px]" fill="none">
      <path d="M1 2h6M8 8h8" stroke="#14302a" strokeWidth="2" />
    </svg>
  </div>
)

type Row = { t: string; i: ReactNode; folder?: 'open' | 'closed'; last?: boolean; sel?: boolean }

const rows: Row[] = [
  { t: '常用构件类型', i: Tr.open, folder: 'open' },
  { t: '轴网(J)', i: Tr.grid },
  { t: '筏板基础(M)', i: Tr.raft },
  { t: '框柱(Z)', i: Tr.col },
  { t: '剪力墙(Q)', i: Tr.wall },
  { t: '梁(L)', i: Tr.beam },
  { t: '现浇板(B)', i: Tr.slab, last: true },
  { t: '轴线', i: Tr.closed, folder: 'closed' },
  { t: '柱', i: Tr.open, folder: 'open' },
  { t: '框柱(Z)', i: Tr.col },
  { t: '暗柱(Z)', i: Tr.col },
  { t: '端柱(Z)', i: Tr.col },
  { t: '构造柱(Z)', i: Tr.gz, last: true, sel: true },
  { t: '墙', i: Tr.open, folder: 'open' },
  { t: '剪力墙(Q)', i: Tr.wall },
  { t: '人防门框墙(RF', i: Tr.door },
  { t: '砌体墙(Q)', i: Tr.brick },
  { t: '暗梁(A)', i: Tr.hbeam },
  { t: '砌体加筋(Y)', i: Tr.rein, last: true },
  { t: '门窗洞', i: Tr.closed, folder: 'closed' },
  { t: '梁', i: Tr.open, folder: 'open' },
  { t: '梁(L)', i: Tr.beam },
  { t: '圈梁(E)', i: Tr.ring, last: true },
  { t: '板', i: Tr.open, folder: 'open' },
  { t: '现浇板(B)', i: Tr.slab },
  { t: '螺旋板(B)', i: Tr.spiral },
  { t: '柱帽(V)', i: Tr.cap },
  { t: '板洞(N)', i: Tr.hole },
  { t: '板受力筋(S)', i: Tr.rebar },
  { t: '板负筋(F)', i: Tr.rebar },
]

const dotted = 'border-dotted border-[#6e6e6e]'
const mono = "text-[11px] tracking-[-0.6px] [font-family:'Liberation_Mono','Noto_Sans_CJK_SC',monospace]"

// name in the UI font, the shortcut in a narrow mono as the app draws it
const TreeLabel = ({ t }: { t: string }) => {
  const [name, code] = t.split('(')
  return (
    <span className="whitespace-nowrap">
      {name}
      {code && <span className={mono}>({code}</span>}
    </span>
  )
}

function TreeRow({ row }: { row: Row }) {
  if (row.folder) {
    return (
      <div className="flex h-4 items-center">
        <div className="flex w-[19px] shrink-0 justify-center pl-[4px]">
          {row.folder === 'open' ? (
            <ChevronDown className="h-[14px] w-[14px] text-[#444]" strokeWidth={2.4} />
          ) : (
            <ChevronRight className="h-[14px] w-[14px] text-[#b0b0b0]" strokeWidth={2.4} />
          )}
        </div>
        <span className={clsx('w-1 shrink-0 border-t', dotted)} />
        {row.i}
        <span className="ml-[5px]"><TreeLabel t={row.t} /></span>
      </div>
    )
  }
  return (
    <div className="flex h-4 items-center">
      <div className={clsx('ml-[12px] h-full w-5 shrink-0 border-l', dotted)} />
      <div className={clsx('h-full w-[11px] shrink-0', !row.last && 'border-l', !row.last && dotted)}>
        <div className={clsx('h-1/2 border-b', dotted, row.last && 'border-l')} />
      </div>
      <div className={clsx('flex h-full items-center', row.sel && 'bg-[#d9d9d9] pr-[5px]')}>
        {row.i}
        <span className="ml-[4px]"><TreeLabel t={row.t} /></span>
      </div>
    </div>
  )
}

function LeftPane() {
  return (
    <div className="flex h-full w-[161px] shrink-0 flex-col">
      <PaneHeader t="模块导航栏" />
      <PaneButton t="工程设置" />
      <PaneButton t="绘图输入" />
      <div className="box-border flex h-[519px] shrink-0 flex-col border border-[#a0a0a0] pl-[2px]">
        <ExpandGlyphs />
        <div className="flex h-[470px] shrink-0">
          <div className="w-[139px] shrink-0 overflow-hidden bg-white">
            {rows.map((r, idx) => (
              <TreeRow key={idx} row={r} />
            ))}
          </div>
          <div className="flex w-[15px] shrink-0 flex-col items-center bg-[#f0f0f0]">
            <div className="flex h-4 shrink-0 items-center"><ChevronUp className="h-3 w-3 text-[#555]" strokeWidth={3} /></div>
            <div className="h-[362px] w-full shrink-0 bg-[#cdcdcd]" />
            <div className="mt-auto flex h-4 shrink-0 items-center"><ChevronDown className="h-3 w-3 text-[#555]" strokeWidth={3} /></div>
          </div>
        </div>
        <div className="flex h-4 w-[154px] shrink-0 items-center bg-[#f0f0f0]">
          <ChevronLeft className="ml-[3px] h-3 w-3 text-[#555]" strokeWidth={3} />
          <div className="ml-[3px] h-4 w-[95px] bg-[#cdcdcd]" />
          <ChevronRight className="ml-[11px] h-3 w-3 text-[#555]" strokeWidth={3} />
        </div>
      </div>
      <PaneButton t="单构件输入" />
      <PaneButton t="报表预览" />
    </div>
  )
}

function ListPane() {
  const items = ['GZ-1', 'GZ-2', 'GZ-3', 'GZ-4', 'GZ-5', 'GZ-6', 'GZ-7', 'GZ-8', 'GZ-9', 'GZ-10']
  return (
    <div className="ml-[5px] flex h-full w-[164px] shrink-0 flex-col">
      <PaneHeader t="构件列表" />
      <div className="flex h-[26px] shrink-0 items-center bg-[#f8f8f8] pl-[5px]">
        <S>
          <path d="M4 0v7M1 3.500h7" stroke="#d8b020" strokeWidth="2.400" />
          <rect x="7" y="7" width="8" height="8" fill="#e8f0fa" stroke="#5a7fa8" />
          <path d="M7 10h8M7 12.500h8" stroke="#5a7fa8" />
        </S>
        <span className="ml-[3px]">新建</span>
        <Caret className="ml-[2px]" />
        <X className="ml-[5px] h-4 w-4 text-[#333]" strokeWidth={2} />
        <span className="ml-[6px]">
          <S>
            <rect x="2" y="1" width="8" height="10" fill="#fff" stroke="#5a8fc8" />
            <rect x="6" y="5" width="8" height="10" fill="#d8e8f8" stroke="#2a6fc0" />
          </S>
        </span>
      </div>
      <div className="flex h-[26px] shrink-0 items-center">
        <div className="ml-px box-border flex h-[25px] w-[138px] shrink-0 items-center border border-[#707070] bg-white pl-[3px] text-[#8c8c8c]">搜索构件...</div>
        <Search className="ml-[4px] h-[17px] w-[17px] -scale-x-100 text-[#3a9ae8]" strokeWidth={2.6} />
      </div>
      <div className="box-border flex-1 border border-[#909090] bg-white pt-[2px] mb-[2px]">
        <div className="flex h-4 items-center pl-[4px]">
          <ChevronDown className="h-[14px] w-[14px] text-[#444]" strokeWidth={2.4} />
          <span className={clsx('w-1 shrink-0 border-t', dotted)} />
          {Tr.gz}
          <span className="ml-[5px]">构造柱</span>
        </div>
        {items.map((g, idx) => (
          <div key={g} className="flex h-4 items-center">
            <div className={clsx('ml-[31px] h-full w-[12px] shrink-0', idx < items.length - 1 && 'border-l', idx < items.length - 1 && dotted)}>
              <div className={clsx('h-1/2 border-b', dotted, idx === items.length - 1 && 'border-l')} />
            </div>
            <div className={clsx('-ml-[4px] flex h-full w-[57px] items-center pl-[4px]', mono, g === 'GZ-10' && 'bg-[#316ac5] text-white')}>
              {Tr.gear}
              <span className="ml-[7px]">{g}</span>
            </div>
          </div>
        ))}
      </div>
    </div>
  )
}

const Cell = ({ w, children }: { w: string; children?: ReactNode }) => (
  <div className={clsx('box-border flex h-[20px] shrink-0 items-center border border-[#dcdcdc] bg-[#fbfbfb] pl-px', w)}>{children}</div>
)

function StatusBar() {
  return (
    <div className="flex h-5 shrink-0 gap-[2px] pl-px">
      <Cell w="w-[147px]"><span className={mono}>X=22032 Y=11955</span></Cell>
      <Cell w="w-[78px]"><span>层高</span><span className={mono}>:4.5m</span></Cell>
      <Cell w="w-[98px]"><span>底标高</span><span className={mono}>:4.45m</span></Cell>
      <Cell w="w-[47px]"><span className={mono}>0</span></Cell>
      <Cell w="w-[915px]" />
      <Cell w="w-[70px]"><span className={mono}>289.2 FPS</span></Cell>
    </div>
  )
}

const AppIcon = ({ className, children }: { className: string; children: ReactNode }) => (
  <div className={clsx('relative flex h-full shrink-0 items-center justify-center', className)}>
    {children}
    <span className="absolute -left-1 -right-1 bottom-0 h-[2px] bg-[#76b9ed]" />
  </div>
)

function Taskbar() {
  return (
    <div className="flex h-10 shrink-0 items-center bg-[#0a1b25] text-white">
      <div className="flex h-full w-12 shrink-0 items-center justify-center bg-[#05090c]">
        <svg viewBox="0 0 16 16" className="h-4 w-4" fill="#fff">
          <path d="M0 2.500l7-1v6H0zM8 1.300L16 0v7.500H8zM0 8.500h7v6l-7-1zM8 8.500h8V16l-8-1.300z" />
        </svg>
      </div>
      <div className="flex h-full w-[337px] shrink-0 items-center bg-[#f0f0f0] pl-[10px] text-[#444]">
        <span className="h-5 w-5 shrink-0 rounded-full border-[3px] border-black" />
        <span className="ml-[10px] whitespace-nowrap text-[14px]">在这里输入你要搜索的内容</span>
        <Mic className="ml-[107px] h-4 w-4 text-[#333]" strokeWidth={1.4} />
      </div>
      <svg viewBox="0 0 16 16" className="ml-[23px] h-4 w-4 shrink-0" fill="none" stroke="#fff">
        <path d="M1 2h9M1 14h9M2.500 5.500h7v5h-7zM13 2v4h2V2zM13 10v4h2v-4z" />
      </svg>
      <svg viewBox="0 0 22 22" className="ml-[31px] h-[22px] w-[22px] shrink-0" fill="#e8e8e8">
        <path d="M11 11C5 11 2 8 3 4s7-3 8 1zM11 11c0-6 3-9 7-8s3 7-1 8zM11 11c6 0 9 3 8 7s-7 3-8-1zM11 11c0 6-3 9-7 8s-3-7 1-8z" />
      </svg>
      <div className="ml-[15px] box-border flex h-[30px] w-[149px] shrink-0 items-center border border-[#55595c] bg-[#3c4043] pl-[4px]">
        <span className="w-[19px] text-center text-[26px] font-bold leading-none text-[#2f8fe8] [font-family:'Liberation_Sans',sans-serif]">e</span>
        <span className="ml-[4px] whitespace-nowrap text-[#a8a8a8]">搜索网页和文件</span>
        <Search className="ml-[13px] h-4 w-4 -scale-x-100 text-[#a8a8a8]" strokeWidth={1.2} />
      </div>
      <div className="relative ml-[14px] flex h-full w-[29px] shrink-0 items-center">
        <svg viewBox="0 0 20 20" className="h-[20px] w-[20px]" fill="none" stroke="#ddd">
          <circle cx="10" cy="10" r="8.500" />
          <circle cx="10" cy="11" r="5" />
          <path d="M7 11a3 3 0 0 0 6 0" />
        </svg>
        <svg viewBox="0 0 12 14" className="absolute right-0 top-[4px] h-[14px] w-[12px]" fill="#f2b31a">
          <path d="M6 0c-3 0-4 3-4 6l-2 5h12l-2-5c0-3-1-6-4-6zM4 12h4l-2 2z" />
        </svg>
      </div>
      <AppIcon className="ml-[19px] w-[24px]">
        <div className="flex h-6 w-6 items-center justify-center rounded-[5px] bg-[#0a8ae6]">
          <svg viewBox="0 0 16 16" className="h-4 w-4" fill="none" stroke="#fff" strokeWidth="1.700"><path d="M8 2v12M2 7h4a2 2 0 0 1 0 4M14 7h-4a2 2 0 0 0 0 4" /></svg>
        </div>
      </AppIcon>
      <AppIcon className="ml-[18px] w-[25px]">
        <svg viewBox="0 0 24 24" className="h-6 w-6" fill="none" stroke="#1a8cf0" strokeWidth="4"><path d="M21 5C12 1 4 7 4 13s6 9 11 7 6-6 3-8-7 0-6 3" /></svg>
      </AppIcon>
      <AppIcon className="ml-[17px] w-[24px]">
        <div className="flex h-6 w-6 items-center justify-center rounded-[4px] bg-[#b9650f] text-[12px] font-bold text-[#f6e0c0]">晰</div>
      </AppIcon>
      <AppIcon className="ml-[18px] w-[25px]">
        <div className="flex h-6 w-6 items-center justify-center rounded-[5px] bg-[#2cae62]">
          <svg viewBox="0 0 16 16" className="h-4 w-4" fill="none" stroke="#fff" strokeWidth="2.400"><path d="M3 2h10M5 2v12M5 8h8M10 8v5" /></svg>
        </div>
      </AppIcon>
      <div className="relative ml-[9px] flex h-full w-10 shrink-0 items-center justify-center bg-[#2c3b45]">
        <svg viewBox="0 0 24 24" className="h-6 w-6">
          <rect width="24" height="24" fill="#f6d9a0" />
          <path d="M12 0h12v12H12z" fill="#a8d8a0" />
          <path d="M0 0h12v12H0z" fill="#6cb0e0" />
          <path d="M12 12h12v12H12z" fill="#d8d8d8" />
          <path d="M2 0L12 13" stroke="#c04060" strokeWidth="3" />
          <circle cx="12" cy="13" r="3" fill="#e82020" />
        </svg>
        <svg viewBox="0 0 10 14" className="absolute left-[21px] top-[18px] h-[14px] w-[10px]"><path d="M1 0v11l3-2 2 5 2-1-2-5h3z" fill="#fff" stroke="#000" /></svg>
        <span className="absolute bottom-0 left-0 right-0 h-[2px] bg-[#76b9ed]" />
      </div>
      <div className="ml-[4px] flex h-full w-4 shrink-0 flex-col items-center justify-between bg-[#ececec] py-[3px] text-[#444]">
        <ChevronUp className="h-[14px] w-[14px]" strokeWidth={2.2} />
        <ChevronDown className="h-[14px] w-[14px]" strokeWidth={2.2} />
      </div>
      <svg viewBox="0 0 14 14" className="ml-[27px] h-[14px] w-[14px] shrink-0" fill="none" stroke="#fff">
        <circle cx="5" cy="7" r="2.200" />
        <circle cx="10" cy="3.500" r="2.200" />
        <path d="M1 13c0-3 2-4 4-4s4 1 4 4M9 7c2 0 4 1 4 3" />
      </svg>
      <div className="ml-[28px] flex w-[48px] shrink-0 flex-col items-center leading-[17px] text-[#d98a1f]">
        <span>77%</span>
        <span className="whitespace-nowrap">CPU使用</span>
      </div>
      <ChevronUp className="ml-[15px] h-5 w-5 shrink-0" strokeWidth={1.4} />
      <svg viewBox="0 0 16 10" className="ml-[7px] h-[10px] w-4 shrink-0" fill="none" stroke="#fff">
        <rect x="4.500" y="0.500" width="10" height="9" />
        <path d="M15.500 3v4M0 5h4M2 3v4" />
      </svg>
      <Wifi className="ml-[11px] h-4 w-4 shrink-0 text-[#ddd]" strokeWidth={1.4} />
      <Volume1 className="ml-[6px] h-4 w-4 shrink-0" strokeWidth={1.2} />
      <svg viewBox="0 0 23 13" className="ml-[8px] h-[13px] w-[23px] shrink-0" fill="none" stroke="#fff">
        <rect x="0.500" y="0.500" width="22" height="12" rx="1" />
        <path d="M3 3.500h17M3 6.500h17M6 9.500h11" strokeDasharray="1 1" />
      </svg>
      <span className="ml-[10px] w-4 shrink-0 text-[14px]">中</span>
      <div className="ml-[11px] flex h-4 w-4 shrink-0 -rotate-6 items-center justify-center rounded-[3px] bg-[#e8401a] text-[13px] font-bold leading-none text-white">S</div>
      <div className="ml-[12px] flex w-[66px] shrink-0 flex-col items-center text-[13px] leading-[19px]">
        <span>16:25</span>
        <span>2018/11/11</span>
      </div>
      <div className="relative ml-[17px] h-full w-6 shrink-0">
        <svg viewBox="0 0 16 14" className="absolute left-0 top-[12px] h-[14px] w-4" fill="#fff">
          <path d="M0 0h16v11H9l-3 3v-3H0z" />
          <path d="M3 3h10M3 6h10M3 9h7" stroke="#333" strokeWidth="0.800" />
        </svg>
        <span className="absolute left-[7px] top-[20px] flex h-4 w-4 items-center justify-center rounded-full bg-[#444] text-[10px] font-bold">1</span>
      </div>
    </div>
  )
}

export default function App() {
  return (
    <div className="relative flex h-[768px] w-[1366px] flex-col overflow-hidden bg-[#f0f0f0] text-[12px] leading-none text-black [font-family:'Liberation_Sans','Noto_Sans_CJK_SC',sans-serif]">
      <TitleBar />
      <MenuBar />
      <MainToolbar />
      <div className="flex h-[628px] shrink-0">
        <LeftPane />
        <ListPane />
        <div className="ml-[3px] flex h-full w-[1033px] shrink-0 flex-col">
          <RowA />
          <RowB />
          <RowC />
          <Canvas />
          <BottomBar />
        </div>
      </div>
      <StatusBar />
      <Taskbar />
    </div>
  )
}
